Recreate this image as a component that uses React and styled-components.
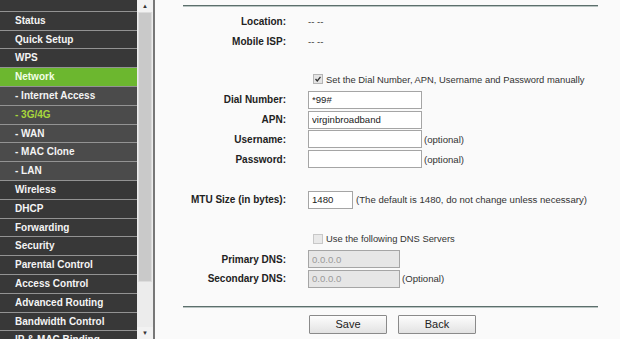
import React from 'react'
import styled, { createGlobalStyle } from 'styled-components'

const menu = [
  { label: 'Status' },
  { label: 'Quick Setup' },
  { label: 'WPS' },
  { label: 'Network', active: true },
  { label: '- Internet Access', sub: true },
  { label: '- 3G/4G', sub: true, selected: true },
  { label: '- WAN', sub: true },
  { label: '- MAC Clone', sub: true },
  { label: '- LAN', sub: true },
  { label: 'Wireless' },
  { label: 'DHCP' },
  { label: 'Forwarding' },
  { label: 'Security' },
  { label: 'Parental Control' },
  { label: 'Access Control' },
  { label: 'Advanced Routing' },
  { label: 'Bandwidth Control' },
  { label: 'IP & MAC Binding' },
]

const App = () => (
  <Page>
    <GlobalStyle />
    <Sidebar>
      <Menu>
        <MenuItem />
        {menu.map(item => (
          <MenuItem key={item.label} $sub={item.sub} $active={item.active} $selected={item.selected}>
            {item.label}
          </MenuItem>
        ))}
      </Menu>
      <Scrollbar>
        <ScrollArrow>▲</ScrollArrow>
        <Thumb />
        <ScrollSpace />
        <ScrollArrow>▼</ScrollArrow>
      </Scrollbar>
    </Sidebar>
    <Content>
      <Rule />
      <Row $h={20.5} $top={4}>
        <Label>Location:</Label>
        <Value>-- --</Value>
      </Row>
      <Row $h={20.5}>
        <Label>Mobile ISP:</Label>
        <Value>-- --</Value>
      </Row>
      <Row $h={20} $top={17}>
        <span />
        <Check>
          <Box $checked>
            <svg width="6" height="6" viewBox="0 0 6 6">
              <path d="M0.5 3 L2.3 5 L5.5 0.8" fill="none" stroke="#333" strokeWidth="1.3" />
            </svg>
          </Box>
          Set the Dial Number, APN, Username and Password manually
        </Check>
      </Row>
      <Row $h={19.8} $top={1}>
        <Label>Dial Number:</Label>
        <Field><Input defaultValue="*99#" /></Field>
      </Row>
      <Row $h={19.8}>
        <Label>APN:</Label>
        <Field><Input defaultValue="virginbroadband" /></Field>
      </Row>
      <Row $h={19.8}>
        <Label>Username:</Label>
        <Field><Input /><Note>(optional)</Note></Field>
      </Row>
      <Row $h={19.8}>
        <Label>Password:</Label>
        <Field><Input type="password" /><Note>(optional)</Note></Field>
      </Row>
      <Row $h={20} $top={20.5}>
        <Label>MTU Size (in bytes):</Label>
        <Field><Input $w={45} defaultValue="1480" /><Note $gap={3}>(The default is 1480, do not change unless necessary)</Note></Field>
      </Row>
      <Row $h={20} $top={19}>
        <span />
        <Check>
          <Box />
          Use the following DNS Servers
        </Check>
      </Row>
      <Row $h={20} $top={0.5}>
        <Label>Primary DNS:</Label>
        <Field><Input $w={92} $disabled readOnly value="0.0.0.0" /></Field>
      </Row>
      <Row $h={19.5}>
        <Label>Secondary DNS:</Label>
        <Field><Input $w={92} $disabled readOnly value="0.0.0.0" /><Note>(Optional)</Note></Field>
      </Row>
      <Rule $top={17} />
      <Buttons>
        <Button>Save</Button>
        <Button>Back</Button>
      </Buttons>
    </Content>
  </Page>
)

const GlobalStyle = createGlobalStyle`
  html, body {
    margin: 0;
    padding: 0;
    background: #fafafa;
    overflow: hidden;
  }
`

const Page = styled.div`
  display: flex;
  width: 620px;
  height: 339px;
  overflow: hidden;
  font-family: "Liberation Sans", Arial, sans-serif;
  font-size: 9.6px;
  color: #222;
`

const Sidebar = styled.div`
  display: flex;
  flex: none;
  width: 153px;
  height: 339px;
  border-right: 2px solid #777;
  box-shadow: 1px 0 0 #d8d8d8;
`

const Menu = styled.div`
  width: 137px;
  margin-top: -7px;
  background: #3a3a3a;
`

const MenuItem = styled.div`
  height: 17.8px;
  line-height: 17.8px;
  border-bottom: 1px solid #939393;
  padding-left: 15px;
  font-family: "Liberation Sans", Arial, sans-serif;
  font-weight: bold;
  font-size: 10px;
  white-space: nowrap;
  background: ${({ $active, $sub }) => ($active ? '#6cb72f' : $sub ? '#4b4b4b' : '#383838')};
  color: ${({ $active, $selected }) => ($selected ? '#a8d63b' : $active ? '#f2ffe6' : '#f4f4f4')};
`

const Scrollbar = styled.div`
  display: flex;
  flex-direction: column;
  width: 16px;
  background: #ececec;
`

const ScrollArrow = styled.div`
  height: 12px;
  font-size: 6px;
  line-height: 12px;
  text-align: center;
  color: #333;
  background: #f2f2f2;
`

const Thumb = styled.div`
  height: 268px;
  margin: 0 1px;
  background: #c9c9c9;
  border: 1px solid #dcdcdc;
`

const ScrollSpace = styled.div`
  flex: 1;
`

const Content = styled.div`
  flex: 1;
  padding-top: 5px;
  background: #fafafa;
`

const Rule = styled.div`
  height: 1px;
  margin: ${({ $top }) => $top || 0}px 22px 0 28px;
  background: #5c6f6c;
  border-bottom: 1px solid #b9c4c2;
`

const Row = styled.div`
  display: grid;
  grid-template-columns: 131px auto;
  column-gap: 22px;
  align-items: center;
  height: ${({ $h }) => $h}px;
  margin-top: ${({ $top }) => $top || 0}px;
`

const Label = styled.div`
  text-align: right;
  font-weight: bold;
  font-size: 10px;
  color: #222;
`

const Value = styled.div`
  color: #333;
`

const Field = styled.div`
  display: flex;
  align-items: center;
`

const Input = styled.input`
  box-sizing: border-box;
  width: ${({ $w }) => $w || 114}px;
  height: 18px;
  padding: 0 3px;
  border: 1px solid #a5a5a5;
  background: ${({ $disabled }) => ($disabled ? '#e6e6e6' : '#fff')};
  font-family: "Liberation Sans", Arial, sans-serif;
  font-size: 9.6px;
  color: ${({ $disabled }) => ($disabled ? '#9a9a9a' : '#222')};
  outline: none;
`

const Note = styled.span`
  margin-left: ${({ $gap }) => $gap || 2}px;
  color: #333;
  white-space: nowrap;
`

const Check = styled.label`
  display: flex;
  align-items: center;
  gap: 3px;
  margin-left: 5px;
  color: #333;
  font-size: 9.4px;
  white-space: nowrap;
`

const Box = styled.span`
  display: inline-flex;
  align-items: center;
  justify-content: center;
  box-sizing: border-box;
  width: 10px;
  height: 10px;
  border: 1px solid ${({ $checked }) => ($checked ? '#b5b5b5' : '#c8c8c8')};
  background: ${({ $checked }) => ($checked ? '#e4e4e4' : '#e9e9e9')};
`

const Buttons = styled.div`
  display: flex;
  gap: 11px;
  margin: 7px 0 0 154px;
`

const Button = styled.button`
  width: 78px;
  height: 19px;
  padding: 0;
  border: 1px solid #8a8a8a;
  border-radius: 1px;
  background: linear-gradient(#fdfdfd, #e2e2e2);
  font-family: "Liberation Sans", Arial, sans-serif;
  font-size: 11px;
  color: #222;
`

export default App
